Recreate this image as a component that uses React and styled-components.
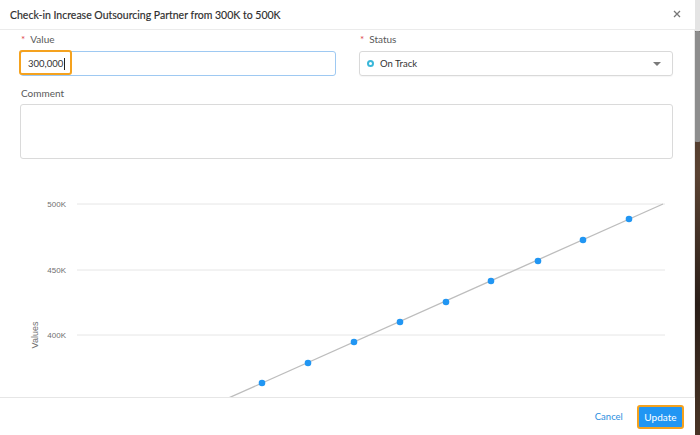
import React from "react";
import styled, { createGlobalStyle } from "styled-components";

const GlobalStyle = createGlobalStyle`
  html, body {
    margin: 0;
    padding: 0;
    background: #ffffff;
    font-family: Lato, "Open Sans", "Liberation Sans", sans-serif;
  }
`;

const Page = styled.div`
  display: flex;
  width: 700px;
  height: 435px;
  overflow: hidden;
`;

const Modal = styled.div`
  flex: 1;
  display: flex;
  flex-direction: column;
  background: #ffffff;
  min-width: 0;
`;

const Header = styled.div`
  height: 29px;
  flex-shrink: 0;
  display: flex;
  align-items: center;
  justify-content: space-between;
  padding: 0 12px 0 10px;
  border-bottom: 1px solid #ebebeb;
`;

const Title = styled.h1`
  margin: 0;
  font-size: 10.5px;
  font-weight: 400;
  color: #2e2e2e;
  -webkit-text-stroke: 0.15px #2e2e2e;
`;

const Close = styled.button`
  border: none;
  background: none;
  padding: 0;
  width: 10px;
  height: 10px;
  display: flex;
  color: #777777;
  cursor: pointer;
`;

const Body = styled.div`
  flex: 1;
  overflow: hidden;
  padding: 2px 21px 0 20px;
  border-right: 1px solid #e6e6e6;
`;

const TopRow = styled.div`
  display: grid;
  grid-template-columns: 316px 1fr;
  column-gap: 23px;
`;

const Field = styled.div`
  display: flex;
  flex-direction: column;
  margin-top: ${(p) => p.$mt || 0}px;
`;

const Label = styled.label`
  height: 15px;
  line-height: 15px;
  font-size: 10px;
  color: #595959;
  margin-bottom: ${(p) => p.$mb || 4}px;
  padding-left: 1px;
`;

const Req = styled.span`
  color: #e0474c;
  margin-right: 5px;
`;

const InputWrap = styled.div`
  position: relative;
  height: 25px;
  box-sizing: border-box;
  border: 1px solid #9ec9f2;
  border-radius: 3px;
  display: flex;
  align-items: center;
  padding-left: 7px;
  font-size: 9.5px;
  color: #333333;
`;

const Caret = styled.span`
  display: inline-block;
  width: 1px;
  height: 12px;
  background: #222222;
  margin-left: 1px;
`;

const FocusRing = styled.span`
  position: absolute;
  left: -2px;
  top: -2px;
  width: 53px;
  height: 25px;
  border: 2.5px solid #f5a21e;
  border-radius: 3px;
  box-sizing: border-box;
`;

const Select = styled.div`
  height: 25px;
  box-sizing: border-box;
  border: 1px solid #d9d9d9;
  border-radius: 3px;
  display: flex;
  align-items: center;
  padding: 0 8px 0 7px;
  font-size: 9.5px;
  color: #333333;
  box-shadow: 0 1px 1px rgba(0, 0, 0, 0.04);
`;

const StatusDot = styled.span`
  width: 3px;
  height: 3px;
  border: 2px solid #3ab7d9;
  border-radius: 50%;
  margin-right: 6px;
`;

const SelectText = styled.span`
  flex: 1;
`;

const Arrow = styled.span`
  width: 0;
  height: 0;
  border-left: 4px solid transparent;
  border-right: 4px solid transparent;
  border-top: 4px solid #7a7a7a;
  margin-right: 3px;
`;

const TextArea = styled.div`
  height: 55px;
  box-sizing: border-box;
  border: 1px solid #dadada;
  border-radius: 3px;
`;

const Chart = styled.svg`
  display: block;
  margin-top: 11px;
  overflow: visible;
`;

const Footer = styled.div`
  height: 37px;
  flex-shrink: 0;
  border-top: 1px solid #e6e6e6;
  display: flex;
  align-items: center;
  justify-content: flex-end;
  gap: 14px;
  padding-right: 11px;
`;

const CancelBtn = styled.button`
  border: none;
  background: none;
  padding: 0;
  font-family: inherit;
  font-size: 9.5px;
  color: #2b8ee0;
  cursor: pointer;
`;

const UpdateBtn = styled.button`
  height: 24px;
  box-sizing: border-box;
  border: 2.5px solid #f5a21e;
  border-radius: 3px;
  background: #2196f3;
  color: #ffffff;
  font-family: inherit;
  font-size: 10px;
  padding: 0 5.5px;
  cursor: pointer;
`;

const ScrollStrip = styled.div`
  width: 5px;
  display: flex;
  flex-direction: column;
  background: linear-gradient(180deg, #3b2c22 0%, #5a4232 40%, #2a1e18 70%, #4a3426 100%);
`;

const TrackTop = styled.div`
  height: 31px;
  background: #e4e4e4;
`;

const Thumb = styled.div`
  height: 111px;
  background: #8d8d8d;
  border-radius: 1px;
`;

const points = [
  [262, 383], [308, 363], [354, 342], [400, 322], [446, 302],
  [491, 281], [538, 261], [583, 240], [629, 219],
];

const grid = [
  { y: 204, label: "500K" },
  { y: 270, label: "450K" },
  { y: 335, label: "400K" },
];

function ValuesChart() {
  return (
    <Chart width="653" height="260" viewBox="20 170 653 260">
      {grid.map((g) => (
        <g key={g.label}>
          <line x1="77" x2="665" y1={g.y} y2={g.y} stroke="#e6e6e6" strokeWidth="1" />
          <text x="66" y={g.y + 3} textAnchor="end" fontSize="8" fill="#707070" fontFamily="Liberation Sans, sans-serif">
            {g.label}
          </text>
        </g>
      ))}
      <text
        x="38"
        y="335"
        transform="rotate(-90 38 335)"
        textAnchor="middle"
        fontSize="9"
        fill="#707070"
        fontFamily="Liberation Sans, sans-serif"
      >
        Values
      </text>
      <line x1="200" y1="410.7" x2="663" y2="204" stroke="#bdbdbd" strokeWidth="1.3" />
      {points.map(([x, y]) => (
        <circle key={x} cx={x} cy={y} r="3.3" fill="#2196f3" />
      ))}
    </Chart>
  );
}

export default function App() {
  return (
    <>
      <GlobalStyle />
      <Page>
        <Modal>
          <Header>
            <Title>Check-in Increase Outsourcing Partner from 300K to 500K</Title>
            <Close aria-label="Close">
              <svg width="8" height="8" viewBox="0 0 8 8">
                <path d="M1 1L7 7M7 1L1 7" stroke="currentColor" strokeWidth="1.3" />
              </svg>
            </Close>
          </Header>

          <Body>
            <TopRow>
              <Field>
                <Label><Req>*</Req>Value</Label>
                <InputWrap>
                  300,000<Caret />
                  <FocusRing />
                </InputWrap>
              </Field>
              <Field>
                <Label><Req>*</Req>Status</Label>
                <Select>
                  <StatusDot />
                  <SelectText>On Track</SelectText>
                  <Arrow />
                </Select>
              </Field>
            </TopRow>

            <Field $mt={10}>
              <Label $mb={3}>Comment</Label>
              <TextArea />
            </Field>

            <ValuesChart />
          </Body>

          <Footer>
            <CancelBtn>Cancel</CancelBtn>
            <UpdateBtn>Update</UpdateBtn>
          </Footer>
        </Modal>
        <ScrollStrip>
          <TrackTop />
          <Thumb />
        </ScrollStrip>
      </Page>
    </>
  );
}
